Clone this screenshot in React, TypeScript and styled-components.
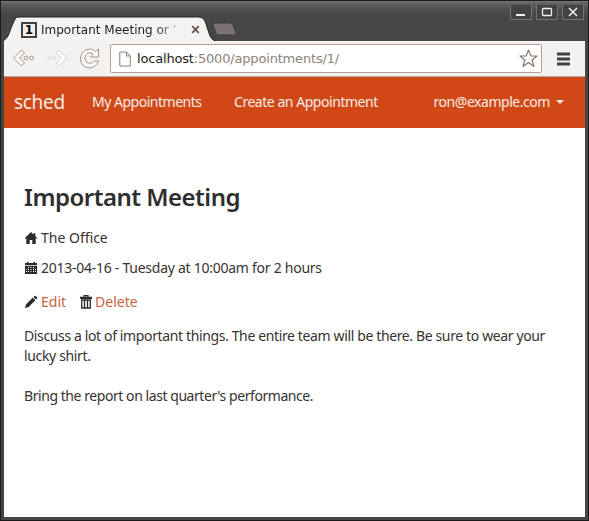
import React from "react";
import styled, { createGlobalStyle } from "styled-components";

const GlobalStyle = createGlobalStyle`
  * { box-sizing: border-box; }
  body { margin: 0; overflow: hidden; }
`;

const Window = styled.div`
  width: 589px;
  height: 521px;
  display: flex;
  flex-direction: column;
  border: 1px solid #1c1b1a;
  padding: 0 3px 3px;
  background: #474645;
  font-family: "Noto Sans", sans-serif;
`;

const TitleBar = styled.header`
  flex: none;
  height: 40px;
  margin: 0 -3px;
  padding-left: 2px;
  display: flex;
  justify-content: space-between;
  background: linear-gradient(#777472 0, #666462 2px, #515050 8px, #464646 14px);
`;

const Tab = styled.div`
  position: relative;
  width: 212px;
  height: 25px;
  margin-top: 15px;
  display: flex;
  align-items: center;
  padding: 2px 0 0 18px;
`;

const TabShape = styled.svg`
  position: absolute;
  left: 0;
  top: 0;
`;

const Favicon = styled.span`
  position: relative;
  flex: none;
  width: 16px;
  height: 16px;
  border: 2px solid #45403e;
  background: #f0efee;
  color: #000;
  font: bold 12px/12px "DejaVu Sans", sans-serif;
  text-align: center;
`;

const TabTitle = styled.span`
  position: relative;
  flex: none;
  width: 142px;
  margin-left: 4px;
  overflow: hidden;
  white-space: nowrap;
  font: 12px/18px "DejaVu Sans", sans-serif;
  color: transparent;
  background: linear-gradient(90deg, #201c1a 112px, #8d8784 130px, #f4f3f2 142px);
  background-clip: text;
`;

const CloseIcon = styled.svg`
  position: relative;
  flex: none;
  margin-left: 8px;
`;

const NewTab = styled.svg`
  flex: none;
  margin: 20px auto 0 -4px;
`;

const Controls = styled.div`
  display: flex;
  gap: 4px;
  padding: 3px 4px 0 0;
`;

const Control = styled.button`
  width: 22px;
  height: 16px;
  padding: 0;
  display: flex;
  align-items: center;
  justify-content: center;
  border: 1px solid #777471;
  border-top-color: #5d5b59;
  background: #444342;
`;

const Toolbar = styled.div`
  flex: none;
  height: 36px;
  padding: 0 14px 0 8px;
  display: flex;
  align-items: center;
  background: #f3f2f1;
  border-bottom: 1px solid #b3aaa5;
`;

const NavIcons = styled.svg`
  flex: none;
`;

const AddressBar = styled.div`
  width: 432px;
  height: 29px;
  margin-left: 8px;
  padding: 0 3px 0 8px;
  display: flex;
  align-items: center;
  border: 1px solid #b99f93;
  border-radius: 2px;
  background: #fff;
`;

const Url = styled.span`
  flex: 1;
  margin-left: 6px;
  font: 13px/20px "DejaVu Sans", sans-serif;
  letter-spacing: -0.18px;
  white-space: nowrap;
  color: #8c827d;
`;

const UrlHost = styled.span`
  color: #1e1a18;
`;

const MenuIcon = styled.svg`
  margin-left: auto;
`;

const Navbar = styled.nav`
  flex: none;
  height: 51px;
  padding: 0 21px 0 10px;
  display: flex;
  align-items: center;
  background: #d14817;
  color: #f8ece6;
`;

const Brand = styled.a`
  width: 78px;
  font-size: 19px;
  line-height: 28px;
  letter-spacing: -0.3px;
  padding-bottom: 2px;
`;

const NavLink = styled.a<{ $width?: number; $spacing: number }>`
  width: ${(p) => (p.$width ? `${p.$width}px` : "auto")};
  font-size: 14px;
  line-height: 20px;
  letter-spacing: ${(p) => p.$spacing}px;
  white-space: nowrap;
  padding-bottom: 1px;
`;

const UserMenu = styled.div`
  margin-left: auto;
  display: flex;
  align-items: center;
  gap: 6px;
`;

const Caret = styled.span`
  border: 4px solid transparent;
  border-top-color: #f8ece6;
  border-bottom: 0;
  margin-bottom: 2px;
`;

const Page = styled.main`
  flex: 1;
  padding: 52px 20px 0;
  background: #fff;
  color: #383230;
  font-size: 14px;
  line-height: 20px;
`;

const Heading = styled.h1`
  margin: 0;
  color: #2f2e2e;
  font-size: 24px;
  line-height: 34px;
  font-weight: 600;
  letter-spacing: -0.5px;
  white-space: nowrap;
`;

const Detail = styled.div<{ $top: number; $spacing: number }>`
  margin-top: ${(p) => p.$top}px;
  height: 20px;
  display: flex;
  align-items: center;
  letter-spacing: ${(p) => p.$spacing}px;
  white-space: nowrap;

  svg {
    flex: none;
    margin-right: 3px;
  }
`;

const Action = styled.a`
  color: #c9623f;
  margin-right: 14px;
`;

const Line = styled.p<{ $top?: number; $spacing: number }>`
  margin: ${(p) => p.$top ?? 0}px 0 0;
  letter-spacing: ${(p) => p.$spacing}px;
  white-space: nowrap;
`;

const HomeIcon = () => (
  <svg width="14" height="14" viewBox="0 0 14 14" fill="#2b2b2b">
    <path d="M7 1 .4 7.6h1.9V13h3.4V9h2.6v4h3.4V7.600h1.900L11.300 5.300V2H9.700v1.700z" />
  </svg>
);

const CalendarIcon = () => (
  <svg width="14" height="14" viewBox="0 0 14 14" fill="#2b2b2b">
    <path d="M1 2h2V1h1.500v1h5V1H11v1h2v2.200H1z" />
    <path fillRule="evenodd" d="M1 5h12v8H1zM4 6v1h1V6zm2.500 0v1h1V6zM9 6v1h1V6zM2 8v1h1V8zm2 0v1h1V8zm2.500 0v1h1V8zM9 8v1h1V8zm2 0v1h1V8zM2 10v1h1v-1zm2 0v1h1v-1zm2.500 0v1h1v-1zM9 10v1h1v-1zm2 0v1h1v-1z" />
  </svg>
);

const PencilIcon = () => (
  <svg width="14" height="14" viewBox="0 0 14 14" fill="#2b2b2b">
    <path d="M1 13l1-3.600 6.800-6.800 2.600 2.600L4.600 12zM9.500 1.900l.9-.9q.7-.5 1.400.1l1.200 1.200q.5.700 0 1.300l-.9.900z" />
  </svg>
);

const TrashIcon = () => (
  <svg width="12" height="14" viewBox="0 0 12 14" fill="none" stroke="#2b2b2b">
    <path d="M4 2V.7h4V2M.5 3.500V2.300h11v1.200z" strokeWidth="1.200" />
    <path d="M1.700 5h8.600v8H1.700zM4.500 5v8M7.500 5v8" strokeWidth="1.300" />
  </svg>
);

export default function App() {
  return (
    <Window>
      <GlobalStyle />
      <TitleBar>
        <Tab>
          <TabShape width="212" height="25" viewBox="0 0 212 25">
            <path d="M0 25C5 22 6 18 8 12L12 3Q13 1 16 1H196Q200 1 202 5L207 20Q209 24 212 25Z" fill="#f4f3f2" />
            <path d="M0 25C5 22 6 18 8 12L12 3Q13 1 16 1H196Q200 1 202 5L207 20Q209 24 212 25" fill="none" stroke="#242322" />
          </TabShape>
          <Favicon>1</Favicon>
          <TabTitle>Important Meeting or ’</TabTitle>
          <CloseIcon width="9" height="9" viewBox="0 0 9 9">
            <path d="m1.200 1.200 6.600 6.600m0-6.600-6.600 6.600" stroke="#66534b" strokeWidth="1.800" />
          </CloseIcon>
        </Tab>
        <NewTab width="28" height="17" viewBox="0 0 28 17">
          <path d="M3 2h16q2 0 3 2l3 8q1 2-1 2H8q-2 0-3-2L2 4q-1-2 1-2z" fill="#7a7371" stroke="#3c3a39" />
        </NewTab>
        <Controls>
          <Control aria-label="Minimize">
            <svg width="12" height="10"><path d="M1 8h9" stroke="#f4f1ed" strokeWidth="2" /></svg>
          </Control>
          <Control aria-label="Maximize">
            <svg width="12" height="10"><rect x="1.500" y="1.500" width="9" height="7" rx="1" fill="none" stroke="#f4f1ed" strokeWidth="1.300" /></svg>
          </Control>
          <Control aria-label="Close">
            <svg width="12" height="10"><path d="m2 1 8 8m0-8-8 8" stroke="#f4f1ed" strokeWidth="1.500" /></svg>
          </Control>
        </Controls>
      </TitleBar>
      <Toolbar>
        <NavIcons width="90" height="24" viewBox="0 0 90 24" fill="#fcfbfa" stroke="#a3938b" strokeLinejoin="round">
          <path d="m1.500 11 8-8 3 3-5 5 5 5-3 3z" />
          <circle cx="14" cy="11" r="1.900" />
          <circle cx="19.500" cy="11" r="1.900" />
          <g stroke="#d9d3cf">
            <path d="m55 11-8-8-3 3 5 5-5 5 3 3z" />
            <circle cx="37.500" cy="11" r="1.500" />
            <circle cx="42.500" cy="11" r="1.500" />
          </g>
          <path d="M83.500 4.500 86.500 2v8h-8l3-3q-5-3-8 1-2 4 1 7 4 3 8-1h4q-3 7-9 7-9-1-9-10 1-8 9-9 3 0 5.500 2z" />
        </NavIcons>
        <AddressBar>
          <svg width="12" height="16" viewBox="0 0 12 16" fill="#fff" stroke="#8d7d75">
            <path d="M.8 1h6.700l3.800 4v10H.8zM7.500 1v4h3.800" />
          </svg>
          <Url><UrlHost>localhost</UrlHost>:5000/appointments/1/</Url>
          <svg width="19" height="19" viewBox="0 0 19 19" fill="#fff" stroke="#85766f" strokeWidth="1.200">
            <path d="m9.500 1 2.400 6H18l-4.900 4 1.900 6.500-5.500-4-5.500 4L5.900 11 1 7h6.100z" strokeLinejoin="round" />
          </svg>
        </AddressBar>
        <MenuIcon width="15" height="14" viewBox="0 0 15 14">
          <path d="M1 2h13M1 7h13M1 12h13" stroke="#45413f" strokeWidth="3" />
        </MenuIcon>
      </Toolbar>
      <Navbar>
        <Brand>sched</Brand>
        <NavLink $width={142} $spacing={-0.49}>My Appointments</NavLink>
        <NavLink $spacing={-0.46}>Create an Appointment</NavLink>
        <UserMenu>
          <NavLink $spacing={-0.46}>ron@example.com</NavLink>
          <Caret />
        </UserMenu>
      </Navbar>
      <Page>
        <Heading>Important Meeting</Heading>
        <Detail $top={14} $spacing={0}><HomeIcon />The Office</Detail>
        <Detail $top={10} $spacing={-0.26}><CalendarIcon />2013-04-16 - Tuesday at 10:00am for 2 hours</Detail>
        <Detail $top={14} $spacing={0}>
          <PencilIcon /><Action>Edit</Action>
          <TrashIcon /><Action>Delete</Action>
        </Detail>
        <Line $top={14} $spacing={-0.37}>Discuss a lot of important things. The entire team will be there. Be sure to wear your</Line>
        <Line $spacing={-0.35}>lucky shirt.</Line>
        <Line $top={20} $spacing={-0.44}>Bring the report on last quarter's performance.</Line>
      </Page>
    </Window>
  );
}
